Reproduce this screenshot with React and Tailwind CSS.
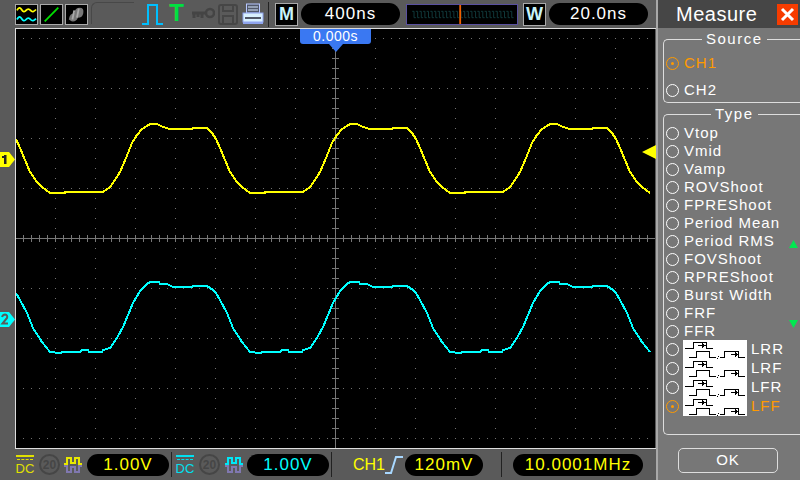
import React from "react";

const yellowShape = [
  [16, 139], [20, 148], [25, 160], [30, 172], [37, 182], [42, 187], [50, 193], [65, 193], [65, 192], [103, 192],
  [110, 187], [115, 180], [120, 172], [126, 158], [132, 143], [137, 135], [142, 129], [147, 126], [150, 124], [157, 124],
  [163, 127], [170, 129], [192, 129], [193, 128], [207, 128], [212, 133], [216, 139],
];
const cyanShape = [
  [16, 293], [20, 300], [27, 313], [33, 328], [42, 342], [50, 352], [60, 353], [63, 352], [80, 352], [82, 350],
  [88, 350], [89, 352], [102, 352], [103, 350], [110, 348], [117, 338], [123, 327], [128, 315], [133, 303], [140, 291],
  [147, 284], [150, 282], [159, 282], [160, 284], [167, 284], [173, 287], [192, 287], [193, 286], [207, 286], [213, 290], [216, 293],
];

const repeatWave = (shape) => {
  const pts = [];
  for (let k = 0; k < 4; k++) {
    shape.forEach(([x, y]) => {
      const px = x + k * 200;
      if (px <= 655) pts.push(`${px},${y}`);
    });
  }
  return pts.join(" ");
};

const range = (from, to, step) => {
  const out = [];
  for (let v = from; v <= to; v += step) out.push(v);
  return out;
};

const Plot = () => (
  <svg viewBox="16 29 639 419" className="w-[639px] h-[419px] block" shapeRendering="crispEdges">
    <rect x="16" y="29" width="639" height="419" fill="#000" />
    {range(55, 655, 40).map((x) =>
      range(38, 448, 10).map((y) => <rect key={`${x}-${y}`} x={x} y={y} width="1" height="1" fill="#707070" />)
    )}
    {range(38, 438, 50).map((y) =>
      range(23, 655, 8).map((x) => <rect key={`h${x}-${y}`} x={x} y={y} width="1" height="1" fill="#707070" />)
    )}
    <rect x="16" y="238" width="639" height="1" fill="#777" />
    <rect x="335" y="29" width="1" height="419" fill="#777" />
    {range(23, 655, 8).map((x) => (
      <rect key={`tx${x}`} x={x} y="235" width="1" height="7" fill="#777" />
    ))}
    {range(38, 448, 10).map((y) => (
      <rect key={`ty${y}`} x="332" y={y} width="7" height="1" fill="#777" />
    ))}
    <polyline points={repeatWave(yellowShape)} fill="none" stroke="#ffff00" strokeWidth="2" />
    <polyline points={repeatWave(cyanShape)} fill="none" stroke="#00ffff" strokeWidth="2" />
  </svg>
);

const Pill = ({ className, children }) => (
  <div className={`h-[22px] bg-black rounded-[11px] flex items-center justify-center text-[17px] tracking-[1px] ${className}`}>
    {children}
  </div>
);

const LetterBox = ({ children }) => (
  <div className="w-[23px] h-[23px] bg-black border border-[#aaa] flex items-center justify-center text-[#c8f4fa] text-[18px] font-bold">
    {children}
  </div>
);

const WaveTile = ({ children }) => (
  <svg viewBox="0 0 23 21" className="w-[23px] h-[21px] mr-[2px] bg-black border border-[#aaa]">{children}</svg>
);

const TopBar = () => (
  <div className="h-[28px] flex items-center pl-[15px]">
    <WaveTile>
      <path d="M1 6 Q3.5 1 6 5 T11 6 T16 6 T22 5" fill="none" stroke="#ffff00" strokeWidth="2" />
      <path d="M1 16 Q3.5 11 6 15 T11 16 T16 16 T22 15" fill="none" stroke="#00ffff" strokeWidth="2" />
    </WaveTile>
    <WaveTile>
      <path d="M4 18 L19 3" stroke="#00e000" strokeWidth="2" />
    </WaveTile>
    <WaveTile>
      <path d="M3 16 Q4 9 9 9 Q10 3 15 3 Q20 3 19 9 Q18 14 13 14 Q11 19 6 18 Z" fill="#777" />
      <path d="M9 6 L7 16 M14 4 L12 14" stroke="#aaa" strokeWidth="2" />
    </WaveTile>
    <div className="w-[43px] h-[22px] ml-[1px] mb-[2px] border-l border-t border-[#484848] rounded-tl-[6px]" />
    <svg viewBox="0 0 22 22" className="w-[22px] h-[22px] ml-[8px]">
      <path d="M0 21 H6 V2 H15 V21 H21" fill="none" stroke="#00bfff" strokeWidth="2" />
    </svg>
    <div className="w-[15px] ml-[5px] text-[#00e040] text-[24px] font-bold leading-[22px] text-center mb-[3px]">T</div>
    <svg viewBox="0 0 24 14" className="w-[24px] h-[14px] ml-[7px]">
      <circle cx="19" cy="6" r="4" fill="none" stroke="#444" strokeWidth="2.5" />
      <path d="M15 6 H1 M3 6 V11 M7 6 V10 M11 6 V11" stroke="#444" strokeWidth="3" fill="none" />
    </svg>
    <svg viewBox="0 0 20 21" className="w-[20px] h-[21px] ml-[3px]">
      <rect x="1" y="1" width="18" height="19" rx="2" fill="none" stroke="#464646" strokeWidth="2" />
      <path d="M5 1 V7 H15 V1 M5 20 V12 H15 V20" fill="none" stroke="#464646" strokeWidth="2" />
    </svg>
    <svg viewBox="0 0 22 22" className="w-[22px] h-[22px] ml-[4px]">
      <rect x="4.5" y="1" width="13" height="9" fill="#51586a" stroke="#b8c8ff" />
      <path d="M6 4 H16 M6 7 H16" stroke="#d8e8ff" />
      <rect x="1" y="10" width="20" height="9" fill="#d8f0ff" stroke="#8fa4ee" />
      <rect x="3" y="14" width="16" height="2" fill="#51586a" />
      <rect x="1" y="19" width="20" height="2" fill="#8fa4ee" />
    </svg>
    <div className="w-px h-[25px] bg-[#222] ml-[4px] mr-[6px]" />
    <LetterBox>M</LetterBox>
    <Pill className="w-[99px] ml-[3px] text-white">400ns</Pill>
    <svg viewBox="0 0 112 21" className="w-[112px] h-[21px] ml-[6px] bg-black border border-[#5a50a0]" shapeRendering="auto">
      <path
        d={range(0, 108, 4).map((x) => `M${x + 1} 7 h2 v7 h2`).join(" ")}
        fill="none"
        stroke="#123e40"
        strokeWidth="1"
      />
      <rect x="53" y="0" width="2" height="21" fill="#f06000" />
    </svg>
    <div className="ml-[5px]">
      <LetterBox>W</LetterBox>
    </div>
    <Pill className="w-[99px] ml-[3px] text-white">20.0ns</Pill>
  </div>
);

const DcIcon = ({ color }) => (
  <div className="w-[18px] flex flex-col items-center text-[13px] leading-[13px]" style={{ color }}>
    <div className="w-[18px] h-[2px]" style={{ background: color }} />
    <div className="w-[16px] h-px mt-[2px] border-t border-dashed" style={{ borderColor: color }} />
    <div className="mt-[2px]">DC</div>
  </div>
);

const Limit = () => (
  <div className="w-[21px] h-[21px] rounded-full border-2 border-[#464646] text-[#464646] text-[12px] font-bold flex items-center justify-center">
    20
  </div>
);

const BandIcon = ({ color }) => (
  <svg viewBox="0 0 18 18" className="w-[18px] h-[18px]">
    <path d="M0 8 H3 V2 H7 V7 H11 V2 H15 V8 H18" fill="none" stroke={color} strokeWidth="2" />
    <path d="M0 10 H3 V16 H7 V11 H11 V16 H15 V10 H18" fill="none" stroke="#8078b0" strokeWidth="2" />
  </svg>
);

const Divider = () => <div className="w-px h-[25px] bg-[#222]" />;

const BottomBar = () => (
  <div className="h-[31px] flex items-center pl-[16px]">
    <DcIcon color="#e0e000" />
    <div className="ml-[5px]"><Limit /></div>
    <div className="ml-[4px]"><BandIcon color="#e8e800" /></div>
    <Pill className="w-[82px] ml-[5px] text-[#ffff00]">1.00V</Pill>
    <div className="ml-[2px] mr-[4px]"><Divider /></div>
    <DcIcon color="#00e0f0" />
    <div className="ml-[5px]"><Limit /></div>
    <div className="ml-[5px]"><BandIcon color="#00e8f8" /></div>
    <Pill className="w-[82px] ml-[4px] text-[#00ffff]">1.00V</Pill>
    <div className="ml-[2px]"><Divider /></div>
    <div className="ml-[21px] w-[28px] text-[#ffff00] text-[16px]">CH1</div>
    <svg viewBox="0 0 18 20" className="w-[18px] h-[20px] ml-[4px]">
      <path d="M0 18 H6 L11 2 H18" fill="none" stroke="#a8d8ff" strokeWidth="2" />
    </svg>
    <Pill className="w-[78px] ml-[2px] text-[#ffff00]">120mV</Pill>
    <div className="ml-[18px]"><Divider /></div>
    <Pill className="w-[130px] ml-[11px] text-[#ffff00]">10.0001MHz</Pill>
  </div>
);

const Radio = ({ on }) => (
  <div className={`w-[13px] h-[13px] rounded-full border flex items-center justify-center shrink-0 ${on ? "border-[#ff9a00]" : "border-white"}`}>
    {on && <div className="w-[3px] h-[3px] rounded-full bg-[#ff9a00]" />}
  </div>
);

const Group = ({ title, titleClass, className, children }) => (
  <div className={`relative border-l border-t border-b border-[#ddd] rounded-l-[5px] ${className}`}>
    <div className={`absolute -top-[10px] bg-[#777] px-[4px] text-[15px] leading-[18px] tracking-[1.5px] text-white ${titleClass}`}>
      {title}
    </div>
    {children}
  </div>
);

const types = [
  "Vtop", "Vmid", "Vamp", "ROVShoot", "FPREShoot", "Period Mean",
  "Period RMS", "FOVShoot", "RPREShoot", "Burst Width", "FRF", "FFR",
];

const Pulses = () => (
  <svg viewBox="0 0 64 19" className="w-[64px] h-[19px] bg-white shrink-0" shapeRendering="crispEdges">
    <path d="M2 8.5 H10.5 V2.5 H23.5 V8.5 H30 M6 17.5 H13.5 V11.5 H26.5 V17.5 H33 M37 17.5 H41.5 V11.5 H55.5 V17.5 H62" fill="none" stroke="#000" />
    <path d="M15 5.5 H22 M48 14.5 H55" stroke="#000" />
    <path d="M19 3 L23 5.5 L19 8 Z M52 12 L56 14.5 L52 17 Z" fill="#000" />
    <rect x="34" y="18" width="1" height="1" fill="#000" />
    <rect x="35" y="16" width="1" height="1" fill="#000" />
  </svg>
);

const Panel = () => (
  <div className="w-[144px] h-[480px] bg-[#777] border-l-2 border-[#a8a8a8] flex flex-col shrink-0">
    <div className="h-[28px] bg-[#464646] flex items-center pl-[18px] pr-[2px] justify-between">
      <span className="text-white text-[20px] tracking-[0.5px]">Measure</span>
      <div className="w-[21px] h-[21px] bg-[#f63c00] flex items-center justify-center">
        <svg viewBox="0 0 15 15" className="w-[15px] h-[15px]">
          <path d="M2 2 L13 13 M13 2 L2 13" stroke="#fff" strokeWidth="3" />
        </svg>
      </div>
    </div>
    <Group title="Source" titleClass="left-[38px]" className="ml-[5px] mt-[11px] h-[64px]">
      <div className="flex items-center gap-[5px] pl-[2px] pt-[14px] text-[#ff9a00] text-[15px] leading-[18px] tracking-[1px]">
        <Radio on />CH1
      </div>
      <div className="flex items-center gap-[5px] pl-[2px] pt-[9px] text-white text-[15px] leading-[18px] tracking-[1px]">
        <Radio />CH2
      </div>
    </Group>
    <Group title="Type" titleClass="left-[47px]" className="ml-[5px] mt-[11px] h-[321px] pl-[2px] pt-[9px]">
      {types.map((t) => (
        <div key={t} className="h-[18px] flex items-center gap-[5px] text-white text-[15px] tracking-[1px] whitespace-pre">
          <Radio />{t}
        </div>
      ))}
      {["LRR", "LRF", "LFR", "LFF"].map((t) => (
        <div key={t} className={`h-[19px] flex items-center text-[15px] tracking-[1px] ${t === "LFF" ? "text-[#ff9a00]" : "text-white"}`}>
          <Radio on={t === "LFF"} />
          <div className="ml-[4px] mr-[4px]"><Pulses /></div>
          {t}
        </div>
      ))}
      <svg viewBox="0 0 9 8" className="absolute left-[125px] top-[125px] w-[9px] h-[8px]">
        <path d="M4.5 0 L9 8 H0 Z" fill="#00e850" />
      </svg>
      <svg viewBox="0 0 9 8" className="absolute left-[125px] top-[205px] w-[9px] h-[8px]">
        <path d="M0 0 H9 L4.5 8 Z" fill="#00e850" />
      </svg>
    </Group>
    <div className="mt-[13px] ml-[20px] w-[100px] h-[25px] border border-[#ddd] rounded-[5px] flex items-center justify-center text-white text-[15px] tracking-[1px]">
      OK
    </div>
  </div>
);

export default function App() {
  return (
    <div className="w-[800px] h-[480px] flex overflow-hidden bg-[#5a5a5a] font-['Liberation_Sans',sans-serif]">
      <div className="w-[656px] h-[480px] flex flex-col relative">
        <TopBar />
        <div className="ml-[15px] w-[641px] h-[421px] border border-[#ddd] border-r-0 relative">
          <Plot />
        </div>
        <BottomBar />
        <div className="absolute left-[300px] top-[29px] w-[71px] h-[15px] bg-[#3a78f2] rounded-b-[3px] text-white text-[14px] leading-[15px] tracking-[0.5px] text-center">
          0.000s
        </div>
        <svg viewBox="0 0 14 8" className="absolute left-[329px] top-[44px] w-[14px] h-[8px]">
          <path d="M0 0 H14 L7 8 Z" fill="#3a78f2" />
        </svg>
        <svg viewBox="0 0 16 15" className="absolute left-0 top-[152px] w-[16px] h-[15px]">
          <path d="M0 0 H9 L15 7.5 L9 15 H0 Z" fill="#ffff00" />
          <rect x="4" y="3" width="2.5" height="9" fill="#222" />
          <rect x="2" y="4" width="2" height="2" fill="#222" />
        </svg>
        <svg viewBox="0 0 16 15" className="absolute left-0 top-[312px] w-[16px] h-[15px]">
          <path d="M0 0 H9 L15 7.5 L9 15 H0 Z" fill="#00ffff" />
          <path d="M2 5 Q3 2.5 5 2.5 Q8 3 7 6 L2.5 11.5 H8" fill="none" stroke="#5a5a5a" strokeWidth="2" />
        </svg>
        <svg viewBox="0 0 14 14" className="absolute left-[642px] top-[145px] w-[14px] h-[14px]">
          <path d="M14 0 V14 L0 7 Z" fill="#ffff00" />
        </svg>
      </div>
      <Panel />
    </div>
  );
}
